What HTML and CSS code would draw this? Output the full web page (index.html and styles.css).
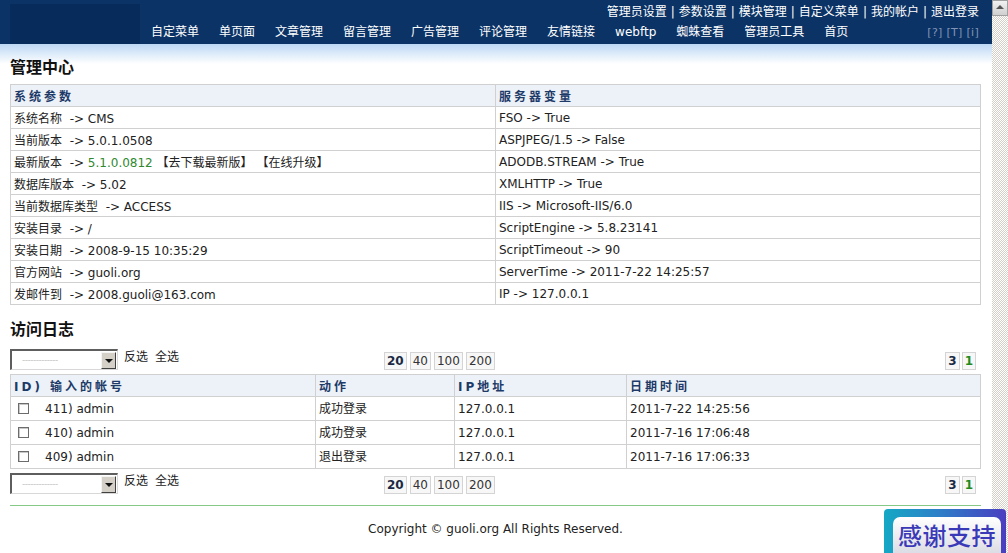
FILE: index.html
```html
<!DOCTYPE html>
<html lang="zh-CN">
<head>
    <meta charset="UTF-8">
    <title>管理中心</title>
    <link rel="stylesheet" href="styles.css">
</head>
<body>
    <div class="screen">
        <div class="page">
            <div class="header">
                <div class="logo"></div>
                <div class="header-main">
                    <div class="toplinks">
                        <a href="#">管理员设置</a><span class="sep">|</span><a href="#">参数设置</a><span class="sep">|</span><a href="#">模块管理</a><span class="sep">|</span><a href="#">自定义菜单</a><span class="sep">|</span><a href="#">我的帐户</a><span class="sep">|</span><a href="#">退出登录</a>
                    </div>
                    <div class="navrow">
                        <ul class="nav">
                            <li><a href="#">自定菜单</a></li>
                            <li><a href="#">单页面</a></li>
                            <li><a href="#">文章管理</a></li>
                            <li><a href="#">留言管理</a></li>
                            <li><a href="#">广告管理</a></li>
                            <li><a href="#">评论管理</a></li>
                            <li><a href="#">友情链接</a></li>
                            <li><a href="#">webftp</a></li>
                            <li><a href="#">蜘蛛查看</a></li>
                            <li><a href="#">管理员工具</a></li>
                            <li><a href="#">首页</a></li>
                        </ul>
                        <span class="help">[?] [T] [i]</span>
                    </div>
                </div>
            </div>

            <div class="main">
                <h2 class="title">管理中心</h2>
                <table class="grid info">
                    <tr>
                        <th>系统参数</th>
                        <th>服务器变量</th>
                    </tr>
                    <tr><td>系统名称 &nbsp;-&gt; CMS</td><td>FSO -&gt; True</td></tr>
                    <tr><td>当前版本 &nbsp;-&gt; 5.0.1.0508</td><td>ASPJPEG/1.5 -&gt; False</td></tr>
                    <tr><td>最新版本 &nbsp;-&gt; <span class="new">5.1.0.0812</span> <a href="#">【去下载最新版】</a> <a href="#">【在线升级】</a></td><td>ADODB.STREAM -&gt; True</td></tr>
                    <tr><td>数据库版本 &nbsp;-&gt; 5.02</td><td>XMLHTTP -&gt; True</td></tr>
                    <tr><td>当前数据库类型 &nbsp;-&gt; ACCESS</td><td>IIS -&gt; Microsoft-IIS/6.0</td></tr>
                    <tr><td>安装目录 &nbsp;-&gt; /</td><td>ScriptEngine -&gt; 5.8.23141</td></tr>
                    <tr><td>安装日期 &nbsp;-&gt; 2008-9-15 10:35:29</td><td>ScriptTimeout -&gt; 90</td></tr>
                    <tr><td>官方网站 &nbsp;-&gt; guoli.org</td><td>ServerTime -&gt; 2011-7-22 14:25:57</td></tr>
                    <tr><td>发邮件到 &nbsp;-&gt; 2008.guoli@163.com</td><td>IP -&gt; 127.0.0.1</td></tr>
                </table>

                <h2 class="title sub">访问日志</h2>
                <div class="toolbar">
                    <div class="tools-left">
                        <div class="select"><span class="placeholder">-------------</span><span class="arrow"></span></div>
                        <a href="#">反选</a>
                        <a href="#">全选</a>
                    </div>
                    <div class="pager">
                        <span class="cur">20</span><span>40</span><span>100</span><span>200</span>
                    </div>
                    <div class="pager pages">
                        <span class="cur">3</span><span class="num">1</span>
                    </div>
                </div>

                <table class="grid log">
                    <colgroup>
                        <col style="width:305px">
                        <col style="width:139px">
                        <col style="width:172px">
                        <col>
                    </colgroup>
                    <tr>
                        <th>ID) 输入的帐号</th>
                        <th>动作</th>
                        <th>IP地址</th>
                        <th>日期时间</th>
                    </tr>
                    <tr>
                        <td><span class="check"></span>411) admin</td>
                        <td class="act">成功登录</td>
                        <td>127.0.0.1</td>
                        <td>2011-7-22 14:25:56</td>
                    </tr>
                    <tr>
                        <td><span class="check"></span>410) admin</td>
                        <td class="act">成功登录</td>
                        <td>127.0.0.1</td>
                        <td>2011-7-16 17:06:48</td>
                    </tr>
                    <tr>
                        <td><span class="check"></span>409) admin</td>
                        <td class="act">退出登录</td>
                        <td>127.0.0.1</td>
                        <td>2011-7-16 17:06:33</td>
                    </tr>
                </table>

                <div class="toolbar bottom">
                    <div class="tools-left">
                        <div class="select"><span class="placeholder">-------------</span><span class="arrow"></span></div>
                        <a href="#">反选</a>
                        <a href="#">全选</a>
                    </div>
                    <div class="pager">
                        <span class="cur">20</span><span>40</span><span>100</span><span>200</span>
                    </div>
                    <div class="pager pages">
                        <span class="cur">3</span><span class="num">1</span>
                    </div>
                </div>

                <div class="footer">Copyright © guoli.org All Rights Reserved.</div>
            </div>
        </div>

        <div class="scrollbar">
            <div class="sb-up"></div>
        </div>
    </div>

    <div class="thanks"><span>感谢支持</span></div>
</body>
</html>
```

FILE: styles.css
```css
* {
    box-sizing: border-box;
    margin: 0;
    padding: 0;
}

body {
    font-family: "DejaVu Sans", Verdana, "Noto Sans CJK SC", sans-serif;
    font-size: 12px;
    color: #222;
    background: #fff;
    height: 553px;
    overflow: hidden;
}

a {
    color: inherit;
    text-decoration: none;
}

.screen {
    display: flex;
    height: 553px;
}

.page {
    flex: 1;
    min-width: 0;
}

/* header */
.header {
    display: flex;
    height: 44px;
    padding: 4px 13px 0 10px;
    background: #0b3366;
    color: #fff;
}

.logo {
    width: 130px;
    height: 40px;
    background: #072b5a;
}

.header-main {
    flex: 1;
    margin-left: 11px;
}

.toplinks {
    height: 16px;
    line-height: 16px;
    text-align: right;
    font-size: 12px;
}

.toplinks .sep {
    padding: 0 4px;
}

.navrow {
    display: flex;
    align-items: center;
    height: 24px;
}

.nav {
    list-style: none;
    display: flex;
    gap: 20px;
    flex: 1;
}

.nav li {
    line-height: 24px;
}

.help {
    font-size: 11px;
    color: #8193b6;
    letter-spacing: 0.3px;
}

/* main */
.main {
    padding: 12px 11px 0 10px;
    background: linear-gradient(#bcd8f4, #ffffff) no-repeat 0 0 / 100% 20px;
}

.title {
    font-size: 16px;
    font-weight: bold;
    line-height: 24px;
    color: #111;
    margin-bottom: 4px;
}

.title.sub {
    margin: 13px 0 7px;
}

.grid {
    width: 100%;
    border-collapse: collapse;
    table-layout: fixed;
    border: 1px solid #c8c8c8;
}

.grid th,
.grid td {
    border: 1px solid #d0d0d0;
    padding: 0 3px;
    text-align: left;
    vertical-align: middle;
    white-space: nowrap;
}

.grid th {
    height: 22px;
    background: #edf2f8;
    color: #1d3a68;
    font-weight: bold;
    letter-spacing: 3px;
}

.info td {
    height: 22px;
    width: 50%;
}

.info th:first-child {
    width: 485px;
}

.info .new {
    color: #2f8a2f;
}

.log td {
    height: 24px;
}

.log td.act {
    vertical-align: top;
    padding-top: 2px;
}

.check {
    display: inline-block;
    width: 11px;
    height: 11px;
    margin: 0 16px 0 4px;
    vertical-align: -1px;
    border: 1px solid #6c6c6c;
    background: #fff;
    box-shadow: inset 1px 1px 0 #c8c8c8;
}

/* toolbar */
.toolbar {
    display: grid;
    grid-template-columns: 374px 1fr auto;
    height: 21px;
    margin-bottom: 4px;
    padding-right: 5px;
}

.toolbar.bottom {
    margin: 4px 0 0;
}

.tools-left {
    display: flex;
    align-items: flex-start;
    gap: 7px;
    line-height: 16px;
}

.select {
    display: flex;
    align-items: center;
    width: 108px;
    height: 21px;
    margin-right: -1px;
    border-top: 2px solid #5e5e5e;
    border-left: 2px solid #5e5e5e;
    border-right: 1px solid #d8d8d8;
    border-bottom: 1px solid #d8d8d8;
    background: #fff;
}

.placeholder {
    flex: 1;
    padding-left: 10px;
    color: #c4c4c4;
    font-size: 9px;
    letter-spacing: -0.5px;
}

.arrow {
    position: relative;
    width: 15px;
    height: 17px;
    margin-right: 1px;
    background: #d4d0c8;
    border: 1px solid;
    border-color: #f4f4f4 #404040 #404040 #f4f4f4;
}

.arrow::after {
    content: "";
    position: absolute;
    left: 3px;
    top: 6px;
    border-left: 4px solid transparent;
    border-right: 4px solid transparent;
    border-top: 4px solid #111;
}

.pager {
    display: flex;
    gap: 3px;
    padding-top: 3px;
}

.pager span {
    height: 18px;
    line-height: 16px;
    padding: 0 2px;
    border: 1px solid #d4d4d4;
    background: #f7f7f7;
    color: #333;
}

.pager .cur {
    font-weight: bold;
    color: #1a2a44;
    padding: 0 2px;
}

.pages {
    gap: 2px;
}

.pages .num {
    color: #1f8a1f;
    font-weight: bold;
    padding: 0 2px;
}

.footer {
    margin-top: 11px;
    border-top: 1px solid #86c886;
    padding-top: 15px;
    line-height: 16px;
    text-align: center;
    color: #222;
}

/* fake classic scrollbar */
.scrollbar {
    width: 16px;
    background: repeating-conic-gradient(#d4d0c8 0 25%, #ffffff 0 50%) 0 0 / 2px 2px;
}

.sb-up {
    position: relative;
    height: 16px;
    background: linear-gradient(#f2f2f2, #cfcfcf);
    border: 1px solid #a0a0a0;
}

.sb-up::after {
    content: "";
    position: absolute;
    left: 3px;
    top: 4px;
    border-left: 4px solid transparent;
    border-right: 4px solid transparent;
    border-bottom: 4px solid #555;
}

/* floating badge */
.thanks {
    position: fixed;
    left: 884px;
    bottom: 0;
    width: 122px;
    height: 44px;
    padding: 8px 5px 0 9px;
    border-radius: 4px 4px 0 0;
    background: linear-gradient(90deg, #14a8c4, #2d7fc8 45%, #4a3ec0);
}

.thanks span {
    display: block;
    height: 36px;
    border-radius: 7px 7px 0 0;
    background: linear-gradient(#ffffff, #dcdce4);
    color: #3a3ab8;
    font-family: "Noto Sans CJK SC", sans-serif;
    font-size: 24px;
    font-weight: 500;
    line-height: 36px;
    text-align: center;
    letter-spacing: 0.5px;
}
```
